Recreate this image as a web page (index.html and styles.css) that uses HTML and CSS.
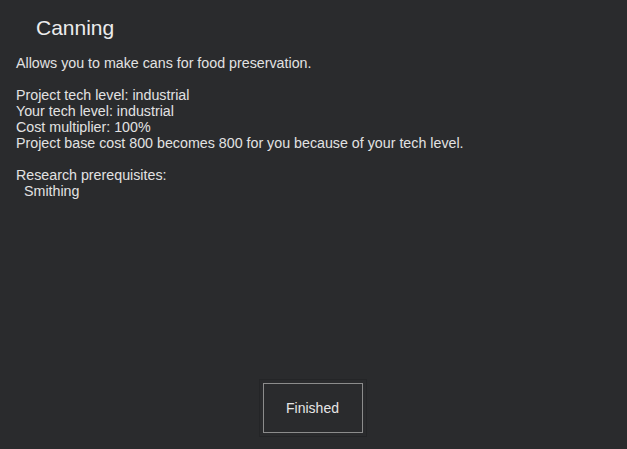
FILE: index.html
```html
<!DOCTYPE html>
<html>
<head>
<meta charset="utf-8">
<link rel="stylesheet" href="styles.css">
</head>
<body>
<div class="panel">
  <h1 class="title">Canning</h1>
  <div class="body">
    <p class="line">Allows you to make cans for food preservation.</p>
    <p class="line blank">&nbsp;</p>
    <p class="line">Project tech level: industrial</p>
    <p class="line">Your tech level: industrial</p>
    <p class="line">Cost multiplier: 100%</p>
    <p class="line">Project base cost 800 becomes 800 for you because of your tech level.</p>
    <p class="line blank">&nbsp;</p>
    <p class="line">Research prerequisites:</p>
    <p class="line indent">Smithing</p>
  </div>
  <div class="footer">
    <div class="btn-wrap"><button class="btn">Finished</button></div>
  </div>
</div>
</body>
</html>
```
FILE: styles.css
```css
html, body {
  margin: 0;
  padding: 0;
  background: #2a2b2d;
  width: 627px;
  height: 449px;
  overflow: hidden;
}
.panel {
  display: flex;
  flex-direction: column;
  height: 449px;
  font-family: "Liberation Sans", Arial, sans-serif;
  color: #e2e2e2;
}
.title {
  margin: 0;
  padding: 14px 0 0 36px;
  font-size: 21px;
  font-weight: normal;
  line-height: 28px;
  color: #ececec;
}
.body {
  padding: 13px 0 0 16px;
  font-size: 14.25px;
  line-height: 16px;
}
.line {
  margin: 0;
  white-space: pre;
}
.indent {
  padding-left: 8px;
}
.footer {
  margin-top: auto;
  display: flex;
  justify-content: center;
  padding: 0 2px 12px 0;
}
.btn-wrap {
  border: 1px solid #242527;
  padding: 3px;
}
.btn {
  width: 100px;
  height: 50px;
  background: #2a2b2d;
  border: 1px solid #8c8c8c;
  color: #e6e6e6;
  font-family: "Liberation Sans", Arial, sans-serif;
  font-size: 14px;
  padding: 0;
}
```
